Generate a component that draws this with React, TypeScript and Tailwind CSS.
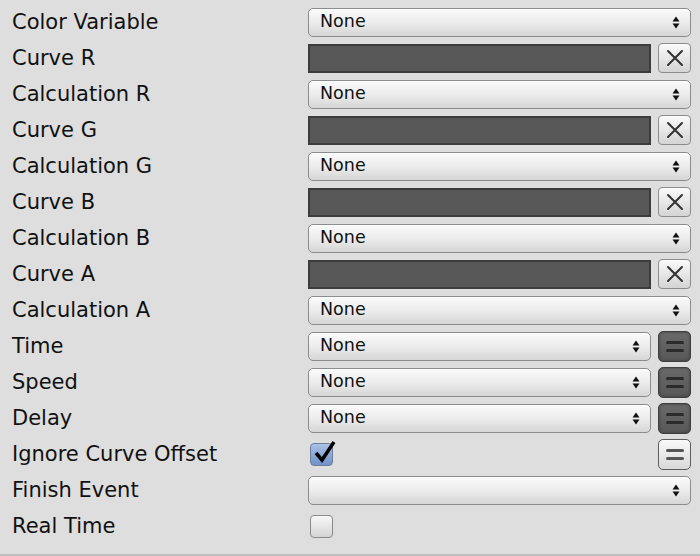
import React from "react";

const Arrows = () => (
  <svg width="8" height="13" viewBox="0 0 8 13" className="shrink-0">
    <path d="M4 0.5 L7.5 5.5 L0.5 5.5 Z" fill="#111" />
    <path d="M4 12.5 L7.5 7.5 L0.5 7.5 Z" fill="#111" />
  </svg>
);

const Dropdown = ({ text, className = "" }: { text?: string; className?: string }) => (
  <div
    className={
      "h-[29px] rounded-[5px] border border-[#8c8c8c] bg-gradient-to-b from-[#fbfbfb] via-[#ececec] to-[#d6d6d6] flex items-center justify-between pl-[11px] pr-[10px] shadow-[inset_0_1px_0_#ffffff] " +
      className
    }
  >
    <span className="text-[17.5px] text-[#111] leading-none">{text ?? ""}</span>
    <Arrows />
  </div>
);

const XButton = () => (
  <div className="w-[33px] h-[30px] rounded-[4px] border border-[#8c8c8c] bg-gradient-to-b from-[#fafafa] to-[#d4d4d4] flex items-center justify-center shrink-0">
    <svg width="20" height="20" viewBox="0 0 20 20">
      <path d="M3 3 L17 17 M17 3 L3 17" stroke="#333" strokeWidth="2" strokeLinecap="round" />
    </svg>
  </div>
);

const EqDark = () => (
  <div className="w-[33px] h-[31px] rounded-[5px] border border-[#3f3f3f] bg-gradient-to-b from-[#6a6a6a] to-[#575757] shadow-[inset_0_0_3px_#3a3a3a] flex flex-col items-center justify-center gap-[5px] shrink-0">
    <div className="w-[18px] h-[3px] rounded-full bg-[#2b2b2b]" />
    <div className="w-[18px] h-[3px] rounded-full bg-[#2b2b2b]" />
  </div>
);

const EqLight = () => (
  <div className="w-[33px] h-[31px] rounded-[5px] border border-[#5e5e5e] bg-gradient-to-b from-[#fafafa] to-[#d8d8d8] flex flex-col items-center justify-center gap-[5px] shrink-0">
    <div className="w-[18px] h-[3px] rounded-full bg-[#555]" />
    <div className="w-[18px] h-[3px] rounded-full bg-[#555]" />
  </div>
);

const CurveField = () => (
  <div className="flex-1 h-[29px] border-2 border-[#3c3c3c] bg-[#575757]" />
);

const Row = ({ label, children }: { label: string; children: React.ReactNode }) => (
  <div className="h-[36px] flex items-center">
    <div className="w-[308px] pl-[12px] text-[21px] text-[#111] leading-none">{label}</div>
    <div className="w-[383px] flex items-center gap-[7px]">{children}</div>
  </div>
);

export default function App() {
  const font = { fontFamily: '"DejaVu Sans", sans-serif' };
  return (
    <div className="w-[700px] h-[556px] bg-[#dedede] border-b-2 border-[#bdbdbd] pt-[4px]" style={font}>
      <Row label="Color Variable"><Dropdown text="None" className="flex-1" /></Row>
      <Row label="Curve R"><CurveField /><XButton /></Row>
      <Row label="Calculation R"><Dropdown text="None" className="flex-1" /></Row>
      <Row label="Curve G"><CurveField /><XButton /></Row>
      <Row label="Calculation G"><Dropdown text="None" className="flex-1" /></Row>
      <Row label="Curve B"><CurveField /><XButton /></Row>
      <Row label="Calculation B"><Dropdown text="None" className="flex-1" /></Row>
      <Row label="Curve A"><CurveField /><XButton /></Row>
      <Row label="Calculation A"><Dropdown text="None" className="flex-1" /></Row>
      <Row label="Time"><Dropdown text="None" className="flex-1" /><EqDark /></Row>
      <Row label="Speed"><Dropdown text="None" className="flex-1" /><EqDark /></Row>
      <Row label="Delay"><Dropdown text="None" className="flex-1" /><EqDark /></Row>
      <Row label="Ignore Curve Offset">
        <div className="flex-1 pl-[2px]">
          <div className="w-[23px] h-[23px] rounded-[4px] border border-[#6f7f99] bg-gradient-to-b from-[#a9c2e6] to-[#6f92c9] relative">
            <svg width="26" height="26" viewBox="0 0 26 26" className="absolute left-[1px] top-[-5px]">
              <path d="M4 14 L10 21 L22 3" stroke="#000" strokeWidth="3.5" fill="none" strokeLinejoin="miter" />
            </svg>
          </div>
        </div>
        <EqLight />
      </Row>
      <Row label="Finish Event"><Dropdown className="flex-1" /></Row>
      <Row label="Real Time">
        <div className="pl-[2px]">
          <div className="w-[23px] h-[23px] rounded-[4px] border border-[#8a8a8a] bg-gradient-to-b from-[#f8f8f8] to-[#d4d4d4]" />
        </div>
      </Row>
    </div>
  );
}
